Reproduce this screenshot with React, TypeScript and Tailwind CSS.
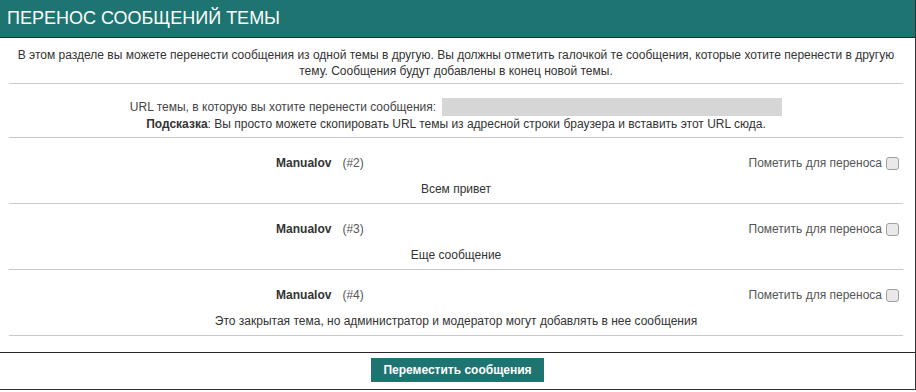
import React from 'react';

const posts = [
    { id: 2, author: 'Manualov', text: 'Всем привет' },
    { id: 3, author: 'Manualov', text: 'Еще сообщение' },
    { id: 4, author: 'Manualov', text: 'Это закрытая тема, но администратор и модератор могут добавлять в нее сообщения' },
];

const PostRow: React.FC<{ id: number; author: string; text: string }> = ({ id, author, text }) => (
    <div className="border-b border-[#c8c8c8] pt-[17px] pb-[6px]">
        <div className="grid grid-cols-[70%_30%] h-4 items-center">
            <div className="text-center pr-[4px]">
                <b className="text-[#333]">{author}</b>
                <span className="ml-[11px] text-[#555]">(#{id})</span>
            </div>
            <label className="flex items-center justify-end pr-[4px] text-[#555]">
                Пометить для переноса
                <input type="checkbox" className="ml-[4px] w-[13px] h-[13px] appearance-none rounded-[3px] border border-[#a0a0a0] bg-[#e9e9e9]" />
            </label>
        </div>
        <div className="mt-[10px] h-4 text-center text-[#333]">{text}</div>
    </div>
);

export default function App() {
    return (
        <div className="w-[916px] h-[392px] bg-white text-[12px] leading-4 text-[#333]" style={{ fontFamily: '"Liberation Sans", Arial, sans-serif' }}>
            <div className="border-r border-b border-[#333] w-[916px]">
                {/* Header */}
                <div className="h-[38px] bg-[#1e7471] border-b border-[#2a2a2a] flex items-center pl-[7px] pb-[1px]">
                    <h2 className="text-white text-[18px] leading-none">ПЕРЕНОС СООБЩЕНИЙ ТЕМЫ</h2>
                </div>

                <div className="pl-[9px] pr-[12px] pb-[16px] border-b border-[#2a2a2a]">
                    <p className="text-center pt-[9px] pb-[4px] border-b border-[#c8c8c8] text-[#333]">
                        В этом разделе вы можете перенести сообщения из одной темы в другую. Вы должны отметить галочкой те сообщения, которые хотите перенести в другую тему. Сообщения будут добавлены в конец новой темы.
                    </p>

                    <div className="pt-[14px] pb-[5px] border-b border-[#c8c8c8] text-center">
                        <div className="flex justify-center items-center h-[18px]">
                            <span className="text-[#444]">URL темы, в которую вы хотите перенести сообщения:</span>
                            <input type="text" className="ml-[6px] w-[340px] h-[18px] bg-[#d6d6d6] outline-none" />
                        </div>
                        <div className="h-4">
                            <b>Подсказка</b>: Вы просто можете скопировать URL темы из адресной строки браузера и вставить этот URL сюда.
                        </div>
                    </div>

                    {posts.map(p => <PostRow key={p.id} {...p} />)}
                </div>

                {/* Footer */}
                <div className="h-[36px] flex justify-center pt-[5px]">
                    <button className="h-6 px-[12px] bg-[#1e7471] text-white font-bold text-[12px]">Переместить сообщения</button>
                </div>
            </div>
        </div>
    );
}
